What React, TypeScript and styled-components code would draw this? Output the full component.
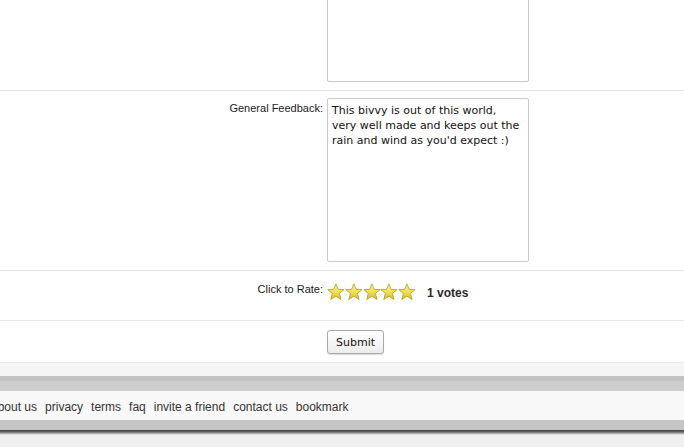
import React from "react";
import styled, { createGlobalStyle } from "styled-components";

const Global = createGlobalStyle`
  html, body { margin: 0; padding: 0; background: #f0f0f0; overflow: hidden; }
  body { font-family: "Liberation Sans", Arial, sans-serif; }
`;

const Page = styled.div`
  background: #ffffff;
  margin-top: -89px;
`;

const Row = styled.div`
  display: grid;
  grid-template-columns: 323px 1fr;
  column-gap: 4px;
  padding: 7px 0 8px;
  border-bottom: 1px solid #e6e6e6;
`;

const Label = styled.div<{ $top?: number }>`
  font-family: "Liberation Sans", Arial, sans-serif;
  font-size: 11px;
  color: #1a1a1a;
  text-align: right;
  padding-top: ${(p) => p.$top ?? 4}px;
`;

const Field = styled.div`
  display: flex;
  align-items: flex-start;
`;

const TextArea = styled.textarea`
  box-sizing: border-box;
  width: 202px;
  height: 164px;
  margin: 0;
  padding: 4px 4px 3px;
  border: 1px solid #c9c9c9;
  border-radius: 2px;
  font-family: "DejaVu Sans", Verdana, sans-serif;
  font-size: 11px;
  line-height: 15px;
  color: #111;
  resize: none;
  outline: none;
  background: #fff;
`;

const Rating = styled.div`
  display: flex;
  align-items: flex-start;
  height: 34px;
  padding-top: 5px;
  box-sizing: border-box;
`;

const Stars = styled.div`
  display: flex;
`;

const Votes = styled.span`
  font-family: "Liberation Sans", Arial, sans-serif;
  font-weight: bold;
  font-size: 12px;
  color: #2a2a2a;
  margin-left: 11px;
  margin-top: 3px;
`;

const SubmitButton = styled.button`
  box-sizing: border-box;
  margin-top: 2px;
  height: 24px;
  width: 57px;
  padding: 0;
  border: 1px solid #a9a9a9;
  border-radius: 3px;
  background: linear-gradient(#ffffff, #ececec);
  box-shadow: 0 1px 1px rgba(0,0,0,0.15);
  font-family: "DejaVu Sans", Verdana, sans-serif;
  font-size: 11px;
  color: #111;
`;

const Spacer = styled.div`
  height: 13px;
  background: #f5f5f7;
`;

const Footer = styled.div`
  border-top: 5px solid #c4c4c4;
  background: #cdcdcd;
  padding-top: 10px;
`;

const LinkBar = styled.nav`
  height: 29px;
  background: #f8f8f8;
  display: flex;
  align-items: center;
  overflow: hidden;
`;

const Links = styled.div`
  display: flex;
  gap: 8px;
  margin-left: -9px;
  margin-top: 3px;
`;

const FooterLink = styled.a`
  font-family: "Liberation Sans", Arial, sans-serif;
  font-size: 12px;
  color: #333;
  text-decoration: none;
  white-space: nowrap;
`;

const FooterBottom = styled.div`
  height: 10px;
  background: #c6c6c6;
`;

const Shadow = styled.div`
  height: 5px;
  background: linear-gradient(#3c3c3c, #6a6a6a 40%, #c8c8c8 80%, #ececec);
`;

const Star = () => (
  <svg width="17.8" height="18" viewBox="0 0 18 18">
    <defs>
      <linearGradient id="sg" x1="0" y1="0" x2="0" y2="1">
        <stop offset="0" stopColor="#fbf59a" />
        <stop offset="0.55" stopColor="#f1de4a" />
        <stop offset="1" stopColor="#d9bd28" />
      </linearGradient>
    </defs>
    <polygon
      points="9,0.8 11.3,6.3 17.2,6.6 12.6,10.4 14.2,16.6 9,13.2 3.8,16.6 5.4,10.4 0.8,6.6 6.7,6.3"
      fill="url(#sg)"
      stroke="#b39a1e"
      strokeWidth="0.8"
      strokeLinejoin="round"
    />
  </svg>
);

export default function App() {
  const links = ["about us", "privacy", "terms", "faq", "invite a friend", "contact us", "bookmark"];
  return (
    <>
      <Global />
      <Page>
        <Row>
          <Label />
          <Field>
            <TextArea readOnly defaultValue="" />
          </Field>
        </Row>
        <Row>
          <Label>General Feedback:</Label>
          <Field>
            <TextArea
              readOnly
              defaultValue={"This bivvy is out of this world, very well made and keeps out the rain and wind as you'd expect :)"}
            />
          </Field>
        </Row>
        <Row>
          <Label $top={5}>Click to Rate:</Label>
          <Field>
            <Rating>
              <Stars>
                {[0, 1, 2, 3, 4].map((i) => (
                  <Star key={i} />
                ))}
              </Stars>
              <Votes>1 votes</Votes>
            </Rating>
          </Field>
        </Row>
        <Row>
          <Label />
          <Field>
            <SubmitButton>Submit</SubmitButton>
          </Field>
        </Row>
      </Page>
      <Spacer />
      <Footer>
        <LinkBar>
          <Links>
            {links.map((l) => (
              <FooterLink key={l} href="#">
                {l}
              </FooterLink>
            ))}
          </Links>
        </LinkBar>
        <FooterBottom />
        <Shadow />
      </Footer>
    </>
  );
}
